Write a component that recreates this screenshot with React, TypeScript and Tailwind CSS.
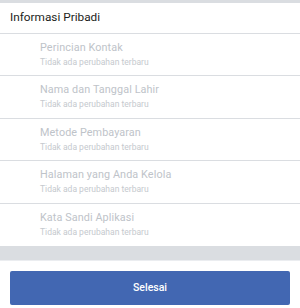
const items = [
  'Perincian Kontak',
  'Nama dan Tanggal Lahir',
  'Metode Pembayaran',
  'Halaman yang Anda Kelola',
  'Kata Sandi Aplikasi',
]

export default function App() {
  return (
    <div className="w-[300px] h-[308px] bg-white overflow-hidden font-['Roboto',sans-serif]">
      <div className="h-[3px] bg-[#dadde1]" />
      <div className="h-[30.5px] flex items-center px-[10px] border-b border-[#dadde1]">
        <span className="text-[11.8px] text-[#1c1e21]">Informasi Pribadi</span>
      </div>
      {items.map((title, i) => (
        <div
          key={title}
          className={
            i < items.length - 1
              ? 'h-[42.5px] flex flex-col justify-center pl-[40px] border-b border-[#dadde1]'
              : 'h-[42.5px] flex flex-col justify-center pl-[40px]'
          }
        >
          <span className="text-[10.8px] leading-[13px] tracking-[0.1px] text-[#bec3c9]">{title}</span>
          <span className="text-[8.5px] leading-[11px] text-[#c5c9ce] mt-[3px]">
            Tidak ada perubahan terbaru
          </span>
        </div>
      ))}
      <div className="h-[15px] bg-[#dadde1] border-b border-[#ebedf0]" />
      <div className="px-[10px] pt-[10px]">
        <button className="w-full h-[34px] rounded-[2px] bg-[#4267b2] text-white text-[10.5px] font-medium">
          Selesai
        </button>
      </div>
    </div>
  )
}
